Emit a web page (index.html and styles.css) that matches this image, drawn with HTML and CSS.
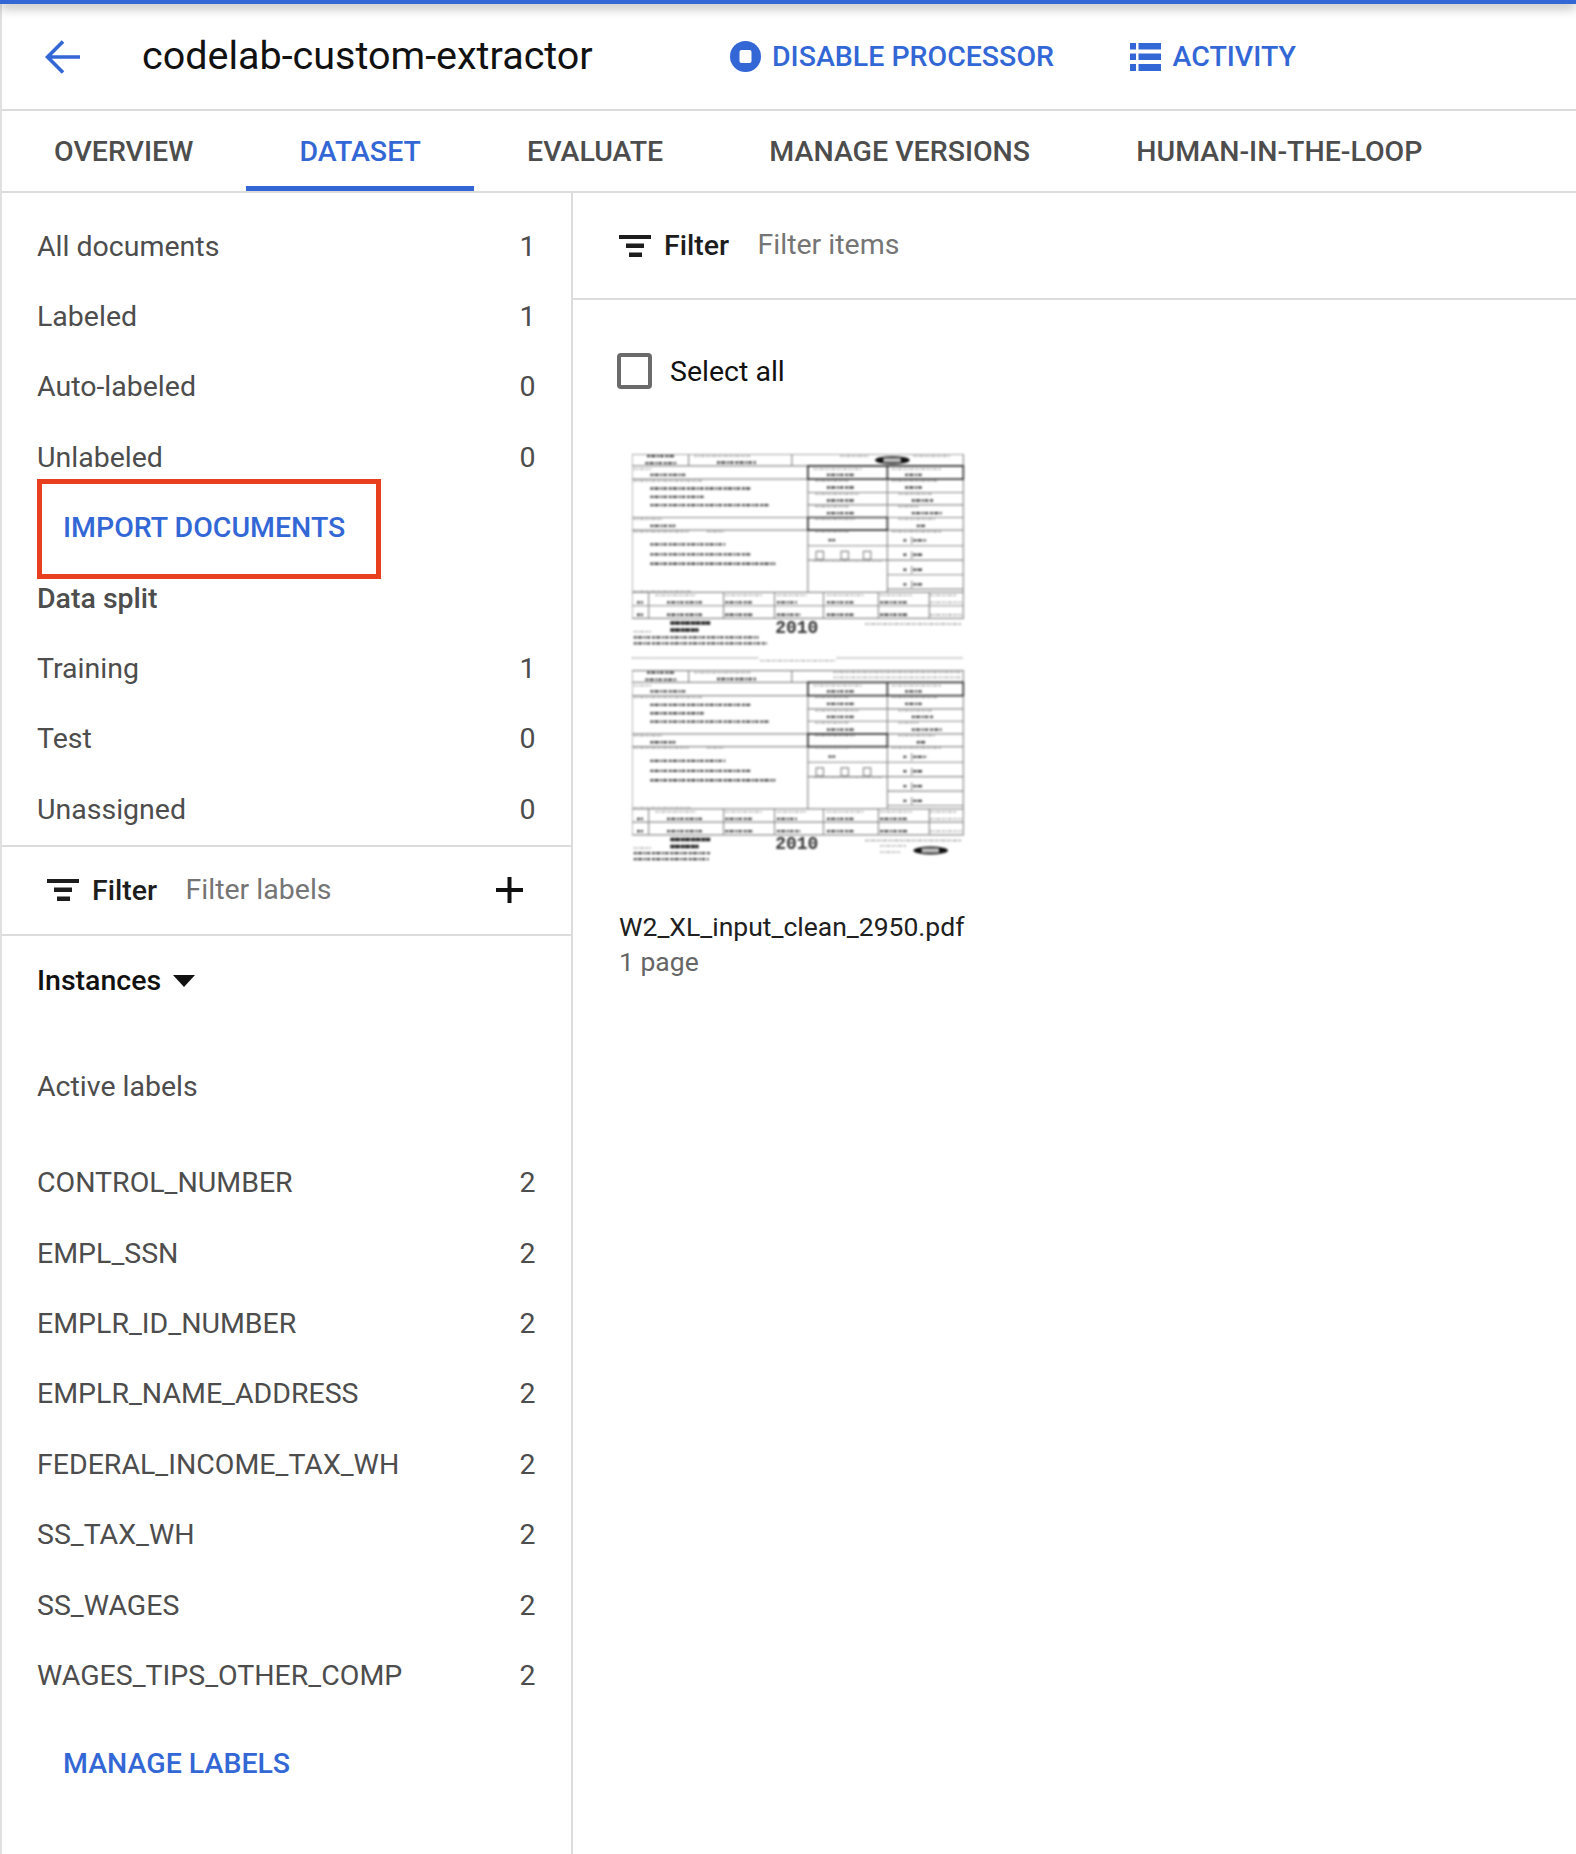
FILE: index.html
```html
<!DOCTYPE html>
<html lang="en">
<head>
<meta charset="utf-8">
<title>codelab-custom-extractor</title>
<link rel="stylesheet" href="styles.css">
</head>
<body>
<div class="page">
  <div class="topbar"></div>
  <header class="header">
    <svg class="back" viewBox="0 0 36 34"><path d="M35 17H3M18 1.500 2.500 17 18 32.500" fill="none" stroke="#3367d6" stroke-width="3.600"/></svg>
    <h1 class="title">codelab-custom-extractor</h1>
    <a class="action disable"><svg class="stop" viewBox="0 0 31 31"><circle cx="15.500" cy="15.500" r="15.500" fill="#3367d6"/><rect x="9.500" y="9" width="12" height="13" rx="2" fill="#fff"/></svg>DISABLE PROCESSOR</a>
    <a class="action activity"><svg class="list" viewBox="0 0 31 28"><path fill="#3367d6" d="M0 0h6v6.500H0zM8.500 0H31v6.500H8.500zM0 10.500h6V17H0zM8.500 10.500H31V17H8.500zM0 21h6v7H0zM8.500 21H31v7H8.500z"/></svg>ACTIVITY</a>
  </header>
  <nav class="tabs">
    <a class="tab">OVERVIEW</a>
    <a class="tab active">DATASET</a>
    <a class="tab">EVALUATE</a>
    <a class="tab">MANAGE VERSIONS</a>
    <a class="tab">HUMAN-IN-THE-LOOP</a>
  </nav>
  <main class="main">
    <aside class="sidebar">
      <ul class="rows first">
        <li class="row"><span>All documents</span><span>1</span></li>
        <li class="row"><span>Labeled</span><span>1</span></li>
        <li class="row"><span>Auto-labeled</span><span>0</span></li>
        <li class="row"><span>Unlabeled</span><span>0</span></li>
      </ul>
      <div class="import-wrap"><a class="link import">IMPORT DOCUMENTS</a></div>
      <ul class="rows">
        <li class="row heading"><span>Data split</span></li>
        <li class="row"><span>Training</span><span>1</span></li>
        <li class="row"><span>Test</span><span>0</span></li>
        <li class="row"><span>Unassigned</span><span>0</span></li>
      </ul>
      <div class="label-filter">
        <svg class="filter-icon" viewBox="0 0 32 22"><path fill="#1d1d1d" d="M0 0h32v4H0zM7 8.500h18V13H7zM10 17.500h13V22H10z"/></svg>
        <span class="filter-word">Filter</span>
        <span class="placeholder">Filter labels</span>
        <svg class="plus" viewBox="0 0 27 26"><path d="M13.500 0v26M0 13h27" stroke="#111" stroke-width="4" fill="none"/></svg>
      </div>
      <div class="instances"><span>Instances</span><svg class="caret" viewBox="0 0 22 12"><path d="M0 0h22L11 12z" fill="#111"/></svg></div>
      <div class="active-title">Active labels</div>
      <ul class="rows labels">
        <li class="row"><span>CONTROL_NUMBER</span><span>2</span></li>
        <li class="row"><span>EMPL_SSN</span><span>2</span></li>
        <li class="row"><span>EMPLR_ID_NUMBER</span><span>2</span></li>
        <li class="row"><span>EMPLR_NAME_ADDRESS</span><span>2</span></li>
        <li class="row"><span>FEDERAL_INCOME_TAX_WH</span><span>2</span></li>
        <li class="row"><span>SS_TAX_WH</span><span>2</span></li>
        <li class="row"><span>SS_WAGES</span><span>2</span></li>
        <li class="row"><span>WAGES_TIPS_OTHER_COMP</span><span>2</span></li>
      </ul>
      <a class="link manage">MANAGE LABELS</a>
    </aside>
    <section class="content">
      <div class="item-filter">
        <svg class="filter-icon" viewBox="0 0 32 22"><path fill="#1d1d1d" d="M0 0h32v4H0zM7 8.500h18V13H7zM10 17.500h13V22H10z"/></svg>
        <span class="filter-word">Filter</span>
        <span class="placeholder">Filter items</span>
      </div>
      <label class="select-all"><span class="checkbox"></span>Select all</label>
      <article class="doc">
        <svg class="thumb" viewBox="0 0 1000 1230">
          <defs>
            <g id="form">
              <g class="rule">
                <path d="M0 0H995V493H0Z"/>
                <path d="M0 35H995M170 0V35M480 0V35M0 75H528M0 190H528M0 228H528M528 35V415M767 35V415"/>
                <path d="M528 115H995M528 152H995M528 190H995M528 228H995M528 275H995M528 318H995M767 362H995M767 405H995M0 415H995M0 455H995"/>
                <path d="M50 415V493M275 415V493M428 415V493M575 415V493M740 415V493M893 415V493"/>
                <path d="M553 292h22v24h-22zM628 292h22v24h-22zM695 292h22v24h-22zM840 248v22M840 292v22M840 336v22M840 380v22"/>
              </g>
              <g class="heavy">
                <path d="M528 35H767V75H528ZM767 35H995V75H767ZM528 190H767V228H528Z"/>
              </g>
              <g class="ink">
                <path d="M45 6h85M40 27h95M255 25h117M55 62h105M55 103h300M55 128h165M55 153h355M55 215h75M55 271h225M55 301h300M55 329h375"/>
                <path d="M585 62h85M585 100h85M585 139h85M585 177h85M590 258h20M820 62h50M820 100h50M840 139h65M840 177h90M855 215h25"/>
                <path d="M815 259h10M845 259h40M815 302h10M845 302h30M815 347h10M845 347h30M815 391h10M845 391h30"/>
                <path d="M105 445h110M280 445h80M435 445h60M585 445h80M745 445h80M105 482h110M280 482h85M435 482h70M585 482h80M745 482h85M15 445h18M15 482h18"/>
                <path class="bold" d="M115 507h120M115 528h85"/>
              </g>
              <g class="fine">
                <path d="M5 45h55M5 80h205M5 195h85M5 232h165M225 232h50M5 412h175"/>
                <path d="M545 45h145M550 80h100M550 120h130M550 157h100M550 195h120M550 232h100M545 320h205M780 45h150M780 80h140M800 120h100M800 157h60M800 195h110M780 232h150"/>
                <path d="M70 424h120M280 424h110M435 424h90M585 424h110M745 424h95M895 424h80M895 445h95M895 482h95M700 510h290M5 533h55"/>
              </g>
              <text class="year" x="495" y="536">2010</text>
            </g>
          </defs>
          <use href="#form"/>
          <g class="fine"><path d="M187 6h168M625 6h85M845 6h110"/></g>
          <ellipse class="oval" cx="782" cy="18" rx="52" ry="12"/>
          <rect class="oval-mid" x="755" y="11" width="52" height="14"/>
          <g class="ink"><path d="M5 550h375M5 568h400"/></g>
          <path class="cut" d="M0 612H380M615 612H995"/>
          <g class="fine"><path d="M385 620h225"/></g>
          <use href="#form" y="650"/>
          <g class="fine"><path d="M187 656h168M605 655h385M605 670h385M605 682h290M745 1176h80M745 1195h60"/></g>
          <g class="ink"><path d="M5 1198h230M5 1216h225"/></g>
          <ellipse class="oval" cx="897" cy="1190" rx="52" ry="12"/>
          <rect class="oval-mid" x="870" y="1183" width="52" height="14"/>
        </svg>
        <div class="doc-name">W2_XL_input_clean_2950.pdf</div>
        <div class="doc-pages">1 page</div>
      </article>
    </section>
  </main>
</div>
</body>
</html>
```
FILE: styles.css
```css
* { box-sizing: border-box; }
html, body { margin: 0; padding: 0; background: #fff; }
body { font-family: Roboto, "Noto Sans", sans-serif; width: 1576px; height: 1854px; overflow: hidden; }
ul { list-style: none; margin: 0; padding: 0; }
.page { width: 1576px; height: 1854px; border-left: 2px solid #e0e0e0; position: relative; display: flex; flex-direction: column; }
.topbar { height: 4px; margin-left: -2px; background: #3367d6; box-shadow: 0 2px 12px rgba(0,0,0,.6); position: relative; z-index: 2; }

.header { height: 107px; border-bottom: 2px solid #dcdcdc; display: flex; align-items: center; padding-left: 43px; flex: none; }
.back { width: 36px; height: 34px; flex: none; }
.title { margin: 0 0 2px 61px; font-size: 39.500px; font-weight: 400; color: #111; width: 588px; white-space: nowrap; }
.action { display: flex; align-items: center; color: #3367d6; font-size: 28.500px; font-weight: 500; white-space: nowrap; }
.stop { width: 31px; height: 31px; margin-right: 11px; }
.list { width: 31px; height: 28px; margin-right: 12px; }
.disable { width: 399.500px; }

.tabs { height: 82px; border-bottom: 2px solid #dcdcdc; display: flex; flex: none; margin-left: -1px; }
.tab { display: flex; align-items: center; padding: 0 53.100px; color: #4d4d4d; font-size: 28.500px; font-weight: 500; height: 80px; white-space: nowrap; }
.tab.active { color: #3367d6; border-bottom: 5px solid #3367d6; padding-top: 5px; }

.main { display: grid; grid-template-columns: 571px 1fr; flex: 1; min-height: 0; }
.sidebar { border-right: 2px solid #dcdcdc; }
.rows.first { padding-top: 18px; }
.row { height: 70.400px; display: flex; align-items: center; justify-content: space-between; padding: 0 35.500px 0 35px; color: #4d4d4d; font-size: 28.500px; }
.heading { font-weight: 500; }
.import-wrap { height: 70.400px; display: flex; align-items: center; margin-left: 35px; }
.link { color: #3367d6; font-size: 28.500px; font-weight: 500; white-space: nowrap; }
.import { display: flex; align-items: center; width: 344px; height: 100px; margin-top: 2px; padding: 0 0 2px 21px; border: 5px solid #e8401f; }

.label-filter { height: 91px; border-top: 2px solid #dcdcdc; border-bottom: 2px solid #dcdcdc; display: flex; align-items: center; padding-left: 45px; }
.filter-icon { width: 32px; height: 22px; flex: none; }
.filter-word { font-size: 28.500px; font-weight: 500; color: #1d1d1d; margin-left: 13px; }
.placeholder { font-size: 28.500px; color: #757575; margin-left: 28.500px; margin-bottom: 2px; }
.plus { width: 27px; height: 26px; margin-left: 164.500px; flex: none; }

.instances { height: 70px; margin-top: 10px; display: flex; align-items: center; padding-left: 35px; font-size: 28.500px; font-weight: 500; color: #111; }
.caret { width: 22px; height: 12px; margin-left: 12px; }
.active-title { height: 70px; margin-top: 36px; display: flex; align-items: center; padding-left: 35px; font-size: 28.500px; color: #4d4d4d; }
.labels { margin-top: 26px; }
.manage { display: block; margin: 18px 0 0 61px; line-height: 70px; }

.item-filter { height: 107px; border-bottom: 2px solid #dcdcdc; display: flex; align-items: center; padding-left: 46px; }
.select-all { display: flex; align-items: center; margin: 53px 0 0 44px; height: 36px; font-size: 28.500px; color: #111; }
.checkbox { width: 35px; height: 36px; border: 4.500px solid #6b6b6b; border-radius: 4px; margin-right: 18px; }
.doc { margin: 65px 0 0 46px; }
.thumb { display: block; width: 333px; height: 410px; margin-left: 13px; filter: blur(.9px); }
.doc-name { margin-top: 45px; font-size: 26.500px; line-height: 36px; color: #202020; white-space: nowrap; }
.doc-pages { font-size: 26.500px; line-height: 34px; color: #666; }

.thumb .rule path { fill: none; stroke: #8a8a8a; stroke-width: 3.500; }
.thumb .heavy path { fill: none; stroke: #3a3a3a; stroke-width: 5; }
.thumb .ink path { fill: none; stroke: #4a4a4a; stroke-width: 7; stroke-dasharray: 9 3 14 4 6 3 11 5; }
.thumb .ink .bold { stroke: #222; stroke-width: 10; stroke-dasharray: 12 1 16 2; }
.thumb .fine path { fill: none; stroke: #a0a0a0; stroke-width: 4; stroke-dasharray: 8 3 5 3 12 4; }
.thumb .year { font-family: "Liberation Mono", monospace; font-weight: 700; font-size: 54px; text-anchor: middle; fill: #333; }
.thumb .oval { fill: #111; }
.thumb .oval-mid { fill: #bbb; }
.thumb .cut { fill: none; stroke: #999; stroke-width: 4; stroke-dasharray: 5 4; }
```
